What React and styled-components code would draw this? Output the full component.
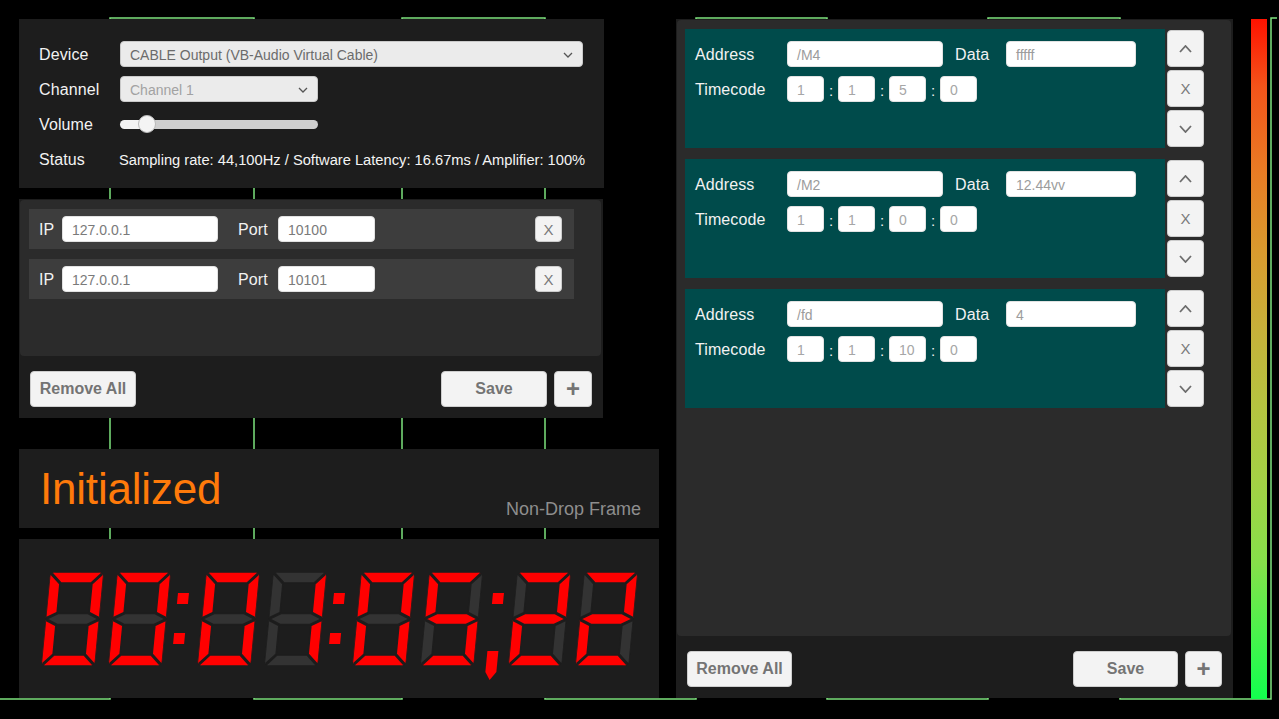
import React from "react";
import styled, { createGlobalStyle } from "styled-components";

const GlobalStyle = createGlobalStyle`
  html, body { margin: 0; padding: 0; background: #000; }
  body { font-family: "Liberation Sans", Arial, sans-serif; }
  * { box-sizing: border-box; }
`;

const Page = styled.div`
  position: relative;
  width: 1279px;
  height: 719px;
  overflow: hidden;
  background: #000;
  display: flex;
  align-items: flex-start;
  padding: 19px 0 0 19px;
`;

const Wave = styled.svg`
  position: absolute;
  left: 0;
  top: 0;
  width: 1279px;
  height: 719px;
  z-index: 0;
`;

const LeftColumn = styled.div`
  position: relative;
  z-index: 1;
  width: 640px;
  display: flex;
  flex-direction: column;
  align-items: flex-start;
`;

const Panel = styled.div`
  background: #1d1d1d;
  width: ${(p) => p.$w}px;
  height: ${(p) => p.$h}px;
  margin-top: ${(p) => p.$mt || 0}px;
`;

const DevicePanel = styled(Panel)`
  padding: 22px 20px 0 20px;
  display: flex;
  flex-direction: column;
  gap: 9px;
`;

const FormRow = styled.div`
  display: flex;
  align-items: center;
  height: 26px;
`;

const Label = styled.div`
  width: ${(p) => p.$w}px;
  flex: none;
  color: #f2f2f2;
  font-size: 16px;
  padding-top: 2px;
  letter-spacing: 0.1px;
  margin-left: ${(p) => p.$ml || 0}px;
  white-space: nowrap;
`;

const Select = styled.div`
  width: ${(p) => p.$w}px;
  height: 26px;
  background: #ebebeb;
  border: 1px solid #c9c9c9;
  border-radius: 4px;
  display: flex;
  align-items: center;
  justify-content: space-between;
  padding: 1px 9px 0 9px;
  font-size: 14px;
  color: ${(p) => (p.$dim ? "#a2a2a2" : "#6b6b6b")};
`;

const SliderBox = styled.div`
  position: relative;
  width: 198px;
  height: 26px;
  display: flex;
  align-items: center;
`;

const Track = styled.div`
  width: 100%;
  height: 9px;
  border-radius: 5px;
  background: linear-gradient(to right, #f2f2f2 0 27px, #cfcfcf 27px 100%);
`;

const Knob = styled.div`
  position: absolute;
  top: 4px;
  width: 18px;
  height: 18px;
  border-radius: 50%;
  background: #f4f4f4;
  border: 1px solid #b9b9b9;
`;

const StatusText = styled.div`
  color: #f4f4f4;
  font-size: 14.7px;
  padding-top: 2px;
  white-space: nowrap;
`;

const ListPanel = styled(Panel)`
  display: flex;
  flex-direction: column;
`;

const ListArea = styled.div`
  margin: 1px 2px 0 1px;
  height: ${(p) => p.$h}px;
  background: #2b2b2b;
  border-radius: 4px;
  padding: 9px 0 0 ${(p) => p.$pl}px;
  display: flex;
  flex-direction: column;
  gap: ${(p) => p.$gap}px;
`;

const IpRow = styled.div`
  width: 545px;
  height: 40px;
  background: #3d3d3d;
  display: flex;
  align-items: center;
  padding-left: 10px;
`;

const Field = styled.div`
  width: ${(p) => p.$w}px;
  height: 26px;
  flex: none;
  background: #fff;
  border-radius: 4px;
  border: 1px solid #e2e2e2;
  display: flex;
  align-items: center;
  padding: 1px 0 0 9px;
  font-size: 14px;
  color: ${(p) => p.$color || "#7a7a7a"};
  white-space: nowrap;
  overflow: hidden;
`;

const SmallButton = styled.div`
  width: ${(p) => p.$w}px;
  height: ${(p) => p.$h}px;
  flex: none;
  background: #f3f3f3;
  border: 1px solid #cdcdcd;
  border-radius: 4px;
  display: flex;
  align-items: center;
  justify-content: center;
  color: #7a7a7a;
  font-size: 15px;
  margin-left: ${(p) => (p.$push ? "auto" : "0")};
  margin-right: ${(p) => p.$mr || 0}px;
`;

const Footer = styled.div`
  display: flex;
  align-items: center;
  padding: 15px 11px 0 11px;
  gap: 7px;
`;

const Button = styled.div`
  width: ${(p) => p.$w}px;
  height: 36px;
  background: #f3f3f3;
  border: 1px solid #cdcdcd;
  border-radius: 4px;
  display: flex;
  align-items: center;
  justify-content: center;
  color: #747474;
  font-size: ${(p) => (p.$big ? 24 : 16)}px;
  font-weight: bold;
  margin-left: ${(p) => (p.$push ? "auto" : "0")};
`;

const StatePanel = styled(Panel)`
  display: flex;
  padding: 18px 18px 0 21px;
`;

const StateTitle = styled.div`
  color: #ff7a0a;
  font-size: 44px;
  line-height: 44px;
  letter-spacing: -0.2px;
`;

const FrameMode = styled.div`
  margin-left: auto;
  align-self: flex-end;
  margin-bottom: 10px;
  color: #8e8e8e;
  font-size: 18px;
  line-height: 18px;
`;

const TimecodePanel = styled(Panel)`
  padding: 29px 0 0 19px;
`;

const RightPanel = styled(Panel)`
  position: relative;
  z-index: 1;
  margin-left: 17px;
  display: flex;
  flex-direction: column;
`;

const Card = styled.div`
  display: flex;
  width: 519px;
  height: 119px;
  flex: none;
`;

const CardBody = styled.div`
  width: 480px;
  background: #004b4b;
  padding: 12px 0 0 10px;
  display: flex;
  flex-direction: column;
  gap: 9px;
`;

const CardButtons = styled.div`
  margin-left: 2px;
  padding-top: 1px;
  display: flex;
  flex-direction: column;
  gap: 3px;
`;

const Colon = styled.div`
  width: 14px;
  flex: none;
  text-align: center;
  color: #f2f2f2;
  font-size: 15px;
  padding-top: 2px;
`;

const Meter = styled.div`
  position: relative;
  z-index: 1;
  width: 16px;
  height: 680px;
  margin-left: 18px;
  background: linear-gradient(
    to bottom,
    #ff1200 0%,
    #f3541a 10%,
    #e97a24 22%,
    #d99a2e 34%,
    #c6b13a 46%,
    #b5c340 57%,
    #a4d145 68%,
    #86e04a 80%,
    #4cf24c 90%,
    #12ff4e 100%
  );
`;

const Chevron = ({ dir = "down", w = 10, h = 6, color = "#555", sw = 1.3 }) => (
  <svg width={w} height={h} viewBox={`0 0 ${w} ${h}`}>
    <polyline
      points={
        dir === "down"
          ? `1,1 ${w / 2},${h - 1} ${w - 1},1`
          : `1,${h - 1} ${w / 2},1 ${w - 1},${h - 1}`
      }
      fill="none"
      stroke={color}
      strokeWidth={sw}
      strokeLinejoin="miter"
    />
  </svg>
);

/* Seven segment drawing */
const W = 54;
const H = 94;
const T = 11;
const SEGS = {
  a: [[1, 0], [W - 1, 0], [W - 1 - T, T], [1 + T, T]],
  b: [[W, 1], [W, H / 2 - 1], [W - T, H / 2 - T / 2 - 1], [W - T, T + 1]],
  c: [[W, H / 2 + 1], [W, H - 1], [W - T, H - T - 1], [W - T, H / 2 + T / 2 + 1]],
  d: [[1 + T, H - T], [W - 1 - T, H - T], [W - 1, H], [1, H]],
  e: [[0, H / 2 + 1], [T, H / 2 + T / 2 + 1], [T, H - T - 1], [0, H - 1]],
  f: [[0, 1], [T, T + 1], [T, H / 2 - T / 2 - 1], [0, H / 2 - 1]],
  g: [[1, H / 2], [1 + T, H / 2 - T / 2], [W - 1 - T, H / 2 - T / 2], [W - 1, H / 2], [W - 1 - T, H / 2 + T / 2], [1 + T, H / 2 + T / 2]],
};
const LIT = {
  0: "abcdef",
  1: "bc",
  2: "abged",
  3: "abgcd",
  4: "fgbc",
  5: "afgcd",
  6: "afgedc",
  7: "abc",
  8: "abcdefg",
  9: "abcdfg",
};
const ON = "#ff0000";
const OFF = "#333333";
const BG = "#1d1d1d";
const SKEW = 5.5;
const SHIFT = H * Math.tan((SKEW * Math.PI) / 180);

const Digit = ({ x, value }) => (
  <g transform={`translate(${x + SHIFT}, 4) skewX(-${SKEW})`} clipPath="url(#digitClip)">
    {Object.entries(SEGS).map(([k, pts]) => (
      <polygon
        key={k}
        points={pts.map((p) => p.join(",")).join(" ")}
        fill={LIT[value].includes(k) ? ON : OFF}
        stroke={BG}
        strokeWidth="1.6"
      />
    ))}
  </g>
);

const Sep = ({ x, semi }) => (
  <g transform={`translate(${x}, 4) skewX(-${SKEW})`}>
    <rect x="0" y="21" width="11" height="11" fill={ON} />
    {semi ? (
      <polygon points="0,79 11,79 11,100 5,108 0,100" fill={ON} />
    ) : (
      <rect x="0" y="61" width="11" height="11" fill={ON} />
    )}
  </g>
);

const TimecodeDisplay = () => (
  <svg width="604" height="116" viewBox="0 0 604 116">
    <defs>
      <clipPath id="digitClip" clipPathUnits="userSpaceOnUse">
        <rect x="0" y="0" width={W} height={H} rx="6" ry="6" />
      </clipPath>
    </defs>
    <Digit x={3} value={0} />
    <Digit x={70} value={0} />
    <Sep x={142} />
    <Digit x={159} value={0} />
    <Digit x={226} value={1} />
    <Sep x={298} />
    <Digit x={314} value={0} />
    <Digit x={382} value={5} />
    <Sep x={457} semi />
    <Digit x={470} value={2} />
    <Digit x={537} value={2} />
  </svg>
);

const cues = [
  { address: "/M4", data: "fffff", tc: ["1", "1", "5", "0"] },
  { address: "/M2", data: "12.44vv", tc: ["1", "1", "0", "0"] },
  { address: "/fd", data: "4", tc: ["1", "1", "10", "0"] },
];

const targets = [
  { ip: "127.0.0.1", port: "10100" },
  { ip: "127.0.0.1", port: "10101" },
];

const wavePoints =
  "0,699 110,699 110,18 254,18 254,699 402,699 402,18 545,18 545,699 696,699 696,18 827,18 827,699 988,699 988,18 1120,18 1120,699 1271,699 1271,18 1277,18";

export default function App() {
  return (
    <>
      <GlobalStyle />
      <Page>
        <Wave viewBox="0 0 1279 719">
          <polyline points={wavePoints} fill="none" stroke="#7ee27e" strokeWidth="1.5" />
        </Wave>

        <LeftColumn>
          <DevicePanel $w={585} $h={169}>
            <FormRow>
              <Label $w={81}>Device</Label>
              <Select $w={463}>
                <span>CABLE Output (VB-Audio Virtual Cable)</span>
                <Chevron />
              </Select>
            </FormRow>
            <FormRow>
              <Label $w={81}>Channel</Label>
              <Select $w={198} $dim>
                <span>Channel 1</span>
                <Chevron />
              </Select>
            </FormRow>
            <FormRow>
              <Label $w={81}>Volume</Label>
              <SliderBox>
                <Track />
                <Knob style={{ left: 18 }} />
              </SliderBox>
            </FormRow>
            <FormRow>
              <Label $w={80}>Status</Label>
              <StatusText>
                Sampling rate: 44,100Hz / Software Latency: 16.67ms / Amplifier: 100%
              </StatusText>
            </FormRow>
          </DevicePanel>

          <ListPanel $w={584} $h={219} $mt={11}>
            <ListArea $h={156} $pl={9} $gap={10}>
              {targets.map((t, i) => (
                <IpRow key={i}>
                  <Label $w={23}>IP</Label>
                  <Field $w={156}>{t.ip}</Field>
                  <Label $w={40} $ml={20}>Port</Label>
                  <Field $w={97}>{t.port}</Field>
                  <SmallButton $w={27} $h={26} $push $mr={12}>
                    X
                  </SmallButton>
                </IpRow>
              ))}
            </ListArea>
            <Footer>
              <Button $w={106}>Remove All</Button>
              <Button $w={106} $push>Save</Button>
              <Button $w={38} $big>+</Button>
            </Footer>
          </ListPanel>

          <StatePanel $w={640} $h={79} $mt={31}>
            <StateTitle>Initialized</StateTitle>
            <FrameMode>Non-Drop Frame</FrameMode>
          </StatePanel>

          <TimecodePanel $w={640} $h={159} $mt={11}>
            <TimecodeDisplay />
          </TimecodePanel>
        </LeftColumn>

        <RightPanel $w={557} $h={679}>
          <ListArea $h={616} $pl={8} $gap={11}>
            {cues.map((c, i) => (
              <Card key={i}>
                <CardBody>
                  <FormRow>
                    <Label $w={92}>Address</Label>
                    <Field $w={156} $color="#9c9c9c">{c.address}</Field>
                    <Label $w={51} $ml={12}>Data</Label>
                    <Field $w={130} $color="#9c9c9c">{c.data}</Field>
                  </FormRow>
                  <FormRow>
                    <Label $w={92}>Timecode</Label>
                    {c.tc.map((v, j) => (
                      <React.Fragment key={j}>
                        {j > 0 && <Colon>:</Colon>}
                        <Field $w={37} $color="#a6a6a6">{v}</Field>
                      </React.Fragment>
                    ))}
                  </FormRow>
                </CardBody>
                <CardButtons>
                  <SmallButton $w={37} $h={37}>
                    <Chevron dir="up" w={13} h={8} color="#6d6d6d" sw={1.8} />
                  </SmallButton>
                  <SmallButton $w={37} $h={37}>X</SmallButton>
                  <SmallButton $w={37} $h={37}>
                    <Chevron dir="down" w={13} h={8} color="#6d6d6d" sw={1.8} />
                  </SmallButton>
                </CardButtons>
              </Card>
            ))}
          </ListArea>
          <Footer>
            <Button $w={105}>Remove All</Button>
            <Button $w={105} $push>Save</Button>
            <Button $w={37} $big>+</Button>
          </Footer>
        </RightPanel>

        <Meter />
      </Page>
    </>
  );
}
